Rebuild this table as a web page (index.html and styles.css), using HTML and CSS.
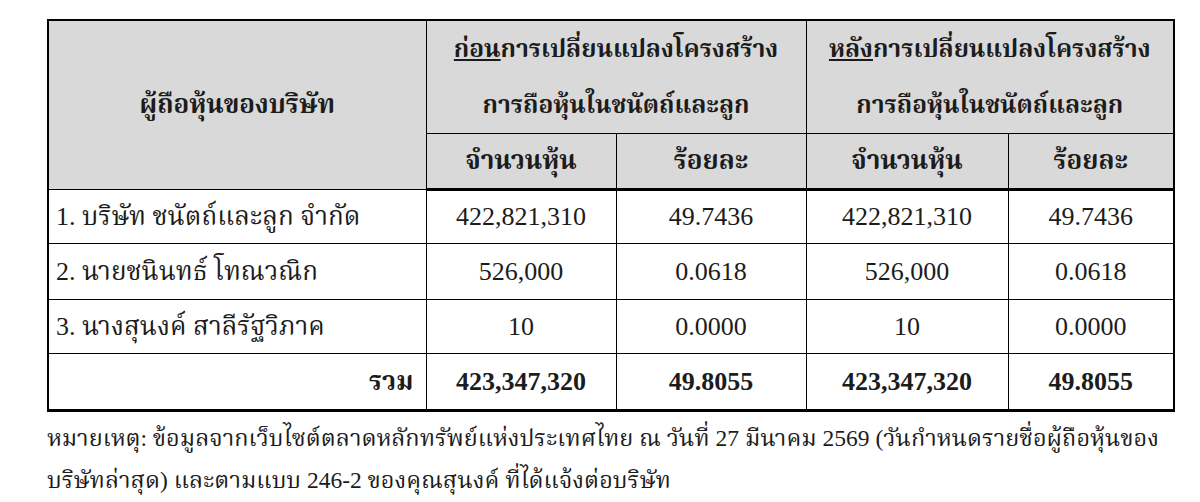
FILE: index.html
```html
<!DOCTYPE html>
<html lang="th">
<head>
<meta charset="utf-8">
<title>ผู้ถือหุ้นของบริษัท</title>
<link rel="stylesheet" href="styles.css">
</head>
<body>
<div class="page">
  <table class="holders">
    <colgroup>
      <col class="c-name">
      <col class="c-num1">
      <col class="c-pct1">
      <col class="c-num2">
      <col class="c-pct2">
    </colgroup>
    <thead>
      <tr class="h-top">
        <th rowspan="2" class="h-name">ผู้ถือหุ้นของบริษัท</th>
        <th colspan="2" class="h-group"><span class="line"><u>ก่อน</u>การเปลี่ยนแปลงโครงสร้าง</span><span class="line">การถือหุ้นในชนัตถ์และลูก</span></th>
        <th colspan="2" class="h-group"><span class="line"><u>หลัง</u>การเปลี่ยนแปลงโครงสร้าง</span><span class="line">การถือหุ้นในชนัตถ์และลูก</span></th>
      </tr>
      <tr class="h-sub">
        <th>จำนวนหุ้น</th>
        <th>ร้อยละ</th>
        <th>จำนวนหุ้น</th>
        <th>ร้อยละ</th>
      </tr>
    </thead>
    <tbody>
      <tr class="r1">
        <td class="name">1. บริษัท ชนัตถ์และลูก จำกัด</td>
        <td class="num">422,821,310</td>
        <td class="num">49.7436</td>
        <td class="num">422,821,310</td>
        <td class="num">49.7436</td>
      </tr>
      <tr class="r2">
        <td class="name">2. นายชนินทธ์ โทณวณิก</td>
        <td class="num">526,000</td>
        <td class="num">0.0618</td>
        <td class="num">526,000</td>
        <td class="num">0.0618</td>
      </tr>
      <tr class="r3">
        <td class="name">3. นางสุนงค์ สาลีรัฐวิภาค</td>
        <td class="num">10</td>
        <td class="num">0.0000</td>
        <td class="num">10</td>
        <td class="num">0.0000</td>
      </tr>
      <tr class="total">
        <td class="name total-label">รวม</td>
        <td class="num">423,347,320</td>
        <td class="num">49.8055</td>
        <td class="num">423,347,320</td>
        <td class="num">49.8055</td>
      </tr>
    </tbody>
  </table>
  <p class="note">หมายเหตุ: ข้อมูลจากเว็บไซต์ตลาดหลักทรัพย์แห่งประเทศไทย ณ วันที่ 27 มีนาคม 2569 (วันกำหนดรายชื่อผู้ถือหุ้นของ<br>บริษัทล่าสุด) และตามแบบ 246-2 ของคุณสุนงค์ ที่ได้แจ้งต่อบริษัท</p>
</div>
</body>
</html>
```

FILE: styles.css
```css
html, body {
  margin: 0;
  padding: 0;
  background: #ffffff;
}

body {
  font-family: "Liberation Serif", "Noto Serif Thai", "Noto Sans Thai", "Loma", "Garuda", serif;
  color: #1c1c1c;
}

.page {
  padding: 19px 0 0 47px;
}

.holders {
  border-collapse: collapse;
  table-layout: fixed;
  width: 1126px;
  border: 2px solid #000;
}

.c-name { width: 378px; }
.c-num1 { width: 190px; }
.c-pct1 { width: 190px; }
.c-num2 { width: 202px; }
.c-pct2 { width: 166px; }

.holders th,
.holders td {
  border: 1px solid #000;
  padding: 0;
  font-size: 26px;
  line-height: 1;
}

.holders thead th {
  background: #d9d9d9;
  font-weight: bold;
  text-align: center;
}

.h-name { font-size: 26px; }
.h-group { font-size: 24.5px !important; }

.h-top { height: 112px; }
.h-sub { height: 56px; }
.h-sub th { border-bottom: 3px solid #000; }
.h-name { border-bottom: 3px solid #000; }

.h-group .line {
  display: block;
  height: 56px;
  line-height: 56px;
}

.r1 { height: 54px; }
.r2 { height: 56px; }
.r3 { height: 54px; }
.total { height: 57px; }

.name {
  text-align: left;
  padding-left: 7px !important;
}

.num {
  text-align: center;
}

.total td {
  font-weight: bold;
  border-bottom: 3px solid #000;
}

.total-label {
  text-align: right !important;
  padding-right: 12px !important;
}

.note {
  margin: 5px 0 0 0;
  font-size: 23.5px;
  line-height: 42px;
  white-space: nowrap;
}
```
